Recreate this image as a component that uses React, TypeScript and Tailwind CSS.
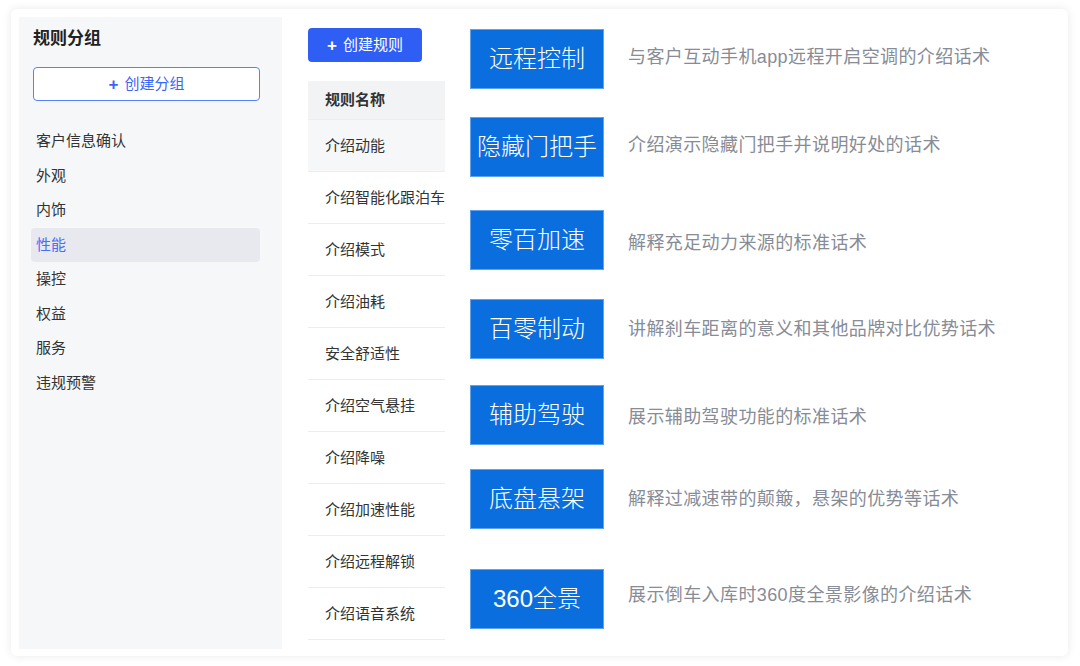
const groups = ['客户信息确认', '外观', '内饰', '性能', '操控', '权益', '服务', '违规预警'];

const rules = [
  '介绍动能',
  '介绍智能化跟泊车',
  '介绍模式',
  '介绍油耗',
  '安全舒适性',
  '介绍空气悬挂',
  '介绍降噪',
  '介绍加速性能',
  '介绍远程解锁',
  '介绍语音系统',
];

// mt = gap above the row, dy = nudge of the text beside the box
const scripts = [
  { tag: '远程控制', desc: '与客户互动手机app远程开启空调的介绍话术', mt: 'mt-0', dy: 'mb-[4px]' },
  { tag: '隐藏门把手', desc: '介绍演示隐藏门把手并说明好处的话术', mt: 'mt-[28px]', dy: 'mb-[4px]' },
  { tag: '零百加速', desc: '解释充足动力来源的标准话术', mt: 'mt-[33px]', dy: 'mt-[6px]' },
  { tag: '百零制动', desc: '讲解刹车距离的意义和其他品牌对比优势话术', mt: 'mt-[29px]', dy: 'mt-0' },
  { tag: '辅助驾驶', desc: '展示辅助驾驶功能的标准话术', mt: 'mt-[26px]', dy: 'mt-[4px]' },
  { tag: '底盘悬架', desc: '解释过减速带的颠簸，悬架的优势等话术', mt: 'mt-[24px]', dy: 'mt-0' },
  { tag: '360全景', desc: '展示倒车入库时360度全景影像的介绍话术', mt: 'mt-[40px]', dy: 'mb-[8px]' },
];

function App() {
  return (
    <div
      className="w-[1080px] h-[666px] bg-white pt-[9px] pl-[11px]"
      style={{ fontFamily: '"Liberation Sans", "Noto Sans CJK SC", sans-serif' }}
    >
      <div className="w-[1057px] h-[647px] bg-white rounded-[6px] shadow-[0_0_10px_rgba(0,0,0,0.09)] p-[8px] flex">
        {/* Left: rule groups */}
        <aside className="w-[263px] h-[632px] bg-[#f6f7f9] pl-[12px] pt-[9px]">
          <h2 className="h-[26px] leading-[26px] ml-[2px] text-[17px] font-bold text-[#222]">规则分组</h2>
          <button className="mt-[15px] ml-[2px] w-[227px] h-[34px] rounded-[4px] border border-[#5a82f6] bg-white text-[15px] text-[#3b66f5] flex items-center justify-center gap-[6px]">
            <span className="text-[17px] font-bold leading-none">+</span>
            创建分组
          </button>
          <ul className="mt-[23px]">
            {groups.map((g) => (
              <li
                key={g}
                className={
                  g === '性能'
                    ? 'w-[229px] h-[34.5px] flex items-center pl-[5px] rounded-[4px] bg-[#e8e9ee] text-[15px] text-[#4a6cf7]'
                    : 'w-[229px] h-[34.5px] flex items-center pl-[5px] text-[15px] text-[#333]'
                }
              >
                {g}
              </li>
            ))}
          </ul>
        </aside>

        {/* Middle: rule table */}
        <section className="ml-[26px] w-[137px] pt-[11px]">
          <button className="w-[114px] h-[34px] rounded-[4px] bg-[#2f5ef5] text-white text-[15px] flex items-center justify-center gap-[6px]">
            <span className="text-[17px] font-bold leading-none">+</span>
            创建规则
          </button>
          <div className="mt-[19px]">
            <div className="h-[39px] bg-[#f2f3f5] border-b border-[#ebedf0] flex items-center pl-[17px] pt-[1px] text-[15px] font-bold text-[#333]">
              规则名称
            </div>
            {rules.map((r, i) => (
              <div
                key={r}
                className={
                  i === 0
                    ? 'h-[52px] bg-[#f6f7f9] border-b border-[#ebedf0] flex items-center pl-[17px] pt-[2px] text-[15px] text-[#333] whitespace-nowrap'
                    : 'h-[52px] bg-white border-b border-[#ebedf0] flex items-center pl-[17px] pt-[2px] text-[15px] text-[#333] whitespace-nowrap'
                }
              >
                {r}
              </div>
            ))}
          </div>
        </section>

        {/* Right: scripts */}
        <section className="ml-[25px] pt-[12px] flex flex-col">
          {scripts.map((s) => (
            <div key={s.tag} className={`${s.mt} flex items-center`}>
              <div className="w-[134px] h-[60px] bg-[#0a6edf] border border-[#5ea2ee] flex items-center justify-center text-white text-[24px] font-light whitespace-nowrap">
                {s.tag}
              </div>
              <p className={`${s.dy} ml-[24px] text-[18px] tracking-[0.4px] text-[#878c96] whitespace-nowrap`}>{s.desc}</p>
            </div>
          ))}
        </section>
      </div>
    </div>
  );
}

export default App;
